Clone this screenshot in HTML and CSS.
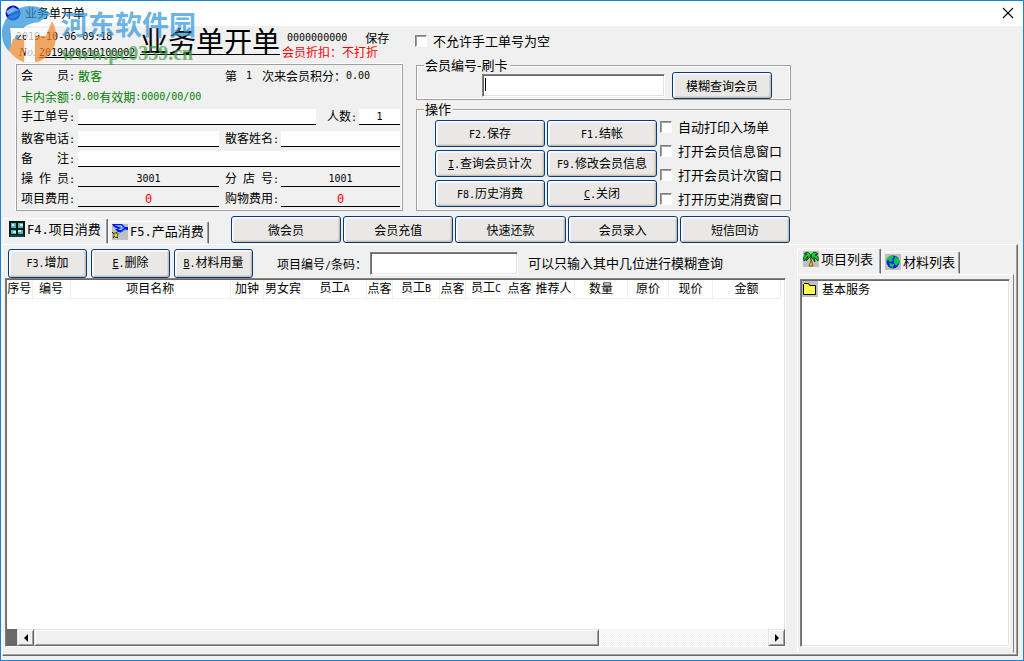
FILE: index.html
```html
<!DOCTYPE html>
<html lang="zh-CN">
<head>
<meta charset="utf-8">
<title>业务单开单</title>
<link rel="stylesheet" href="styles.css">
</head>
<body>
<div class="window">
  <header class="titlebar">
    <svg class="app-icon" viewBox="0 0 16 16"><circle cx="8" cy="8" r="7.5" fill="#1010c8"/><path d="M1 6L8 2L14 5L9 7L3 10Z" fill="#7fb4ff"/><path d="M3 12L13 8L14 10L8 14Z" fill="#4668ee"/></svg>
    <span>业务单开单</span>
    <button class="close" aria-label="关闭"><svg viewBox="0 0 12 12"><path d="M1 1L11 11M11 1L1 11" stroke="#000" stroke-width="1.1"/></svg></button>
  </header>

  <section class="top">
    <div class="bill">
      <div class="bill-head">
        <div class="stamp">
          <div class="n">2019-10-06 09:18</div>
          <div class="serial"><i>No.</i><u class="n">2019100610100002</u></div>
        </div>
        <h1>业务单开单</h1>
        <div class="status">
          <div class="status-row"><span class="n">0000000000</span><span>保存</span></div>
          <div class="red">会员折扣：不打折</div>
        </div>
      </div>
      <div class="member">
        <div class="row tall">
          <span class="label"><span>会</span><span>员<b class="n">:</b></span></span><span class="green who">散客</span>
          <span>第</span><span class="n visit">1</span><span>次来会员积分：</span><span class="n">0.00</span>
        </div>
        <div class="row tall green">卡内余额<span class="n">:0.00</span>有效期<span class="n">:0000/00/00</span></div>
        <div class="row first">
          <label class="label" for="manual"><span>手工单号<b class="n">:</b></span></label><input id="manual" class="field">
          <label class="people" for="people">人数<b class="n">:</b></label><input id="people" class="field small" value="1">
        </div>
        <div class="row second">
          <label class="label" for="phone"><span>散客电话<b class="n">:</b></span></label><input id="phone" class="field">
          <label class="label second-label" for="name"><span>散客姓名<b class="n">:</b></span></label><input id="name" class="field half">
        </div>
        <div class="row">
          <label class="label" for="memo"><span>备</span><span>注<b class="n">:</b></span></label><input id="memo" class="field">
        </div>
        <div class="row">
          <label class="label" for="operator"><span>操</span><span>作</span><span>员<b class="n">:</b></span></label><input id="operator" class="field plain" value="3001" readonly>
          <label class="label second-label" for="branch"><span>分</span><span>店</span><span>号<b class="n">:</b></span></label><input id="branch" class="field half plain" value="1001" readonly>
        </div>
        <div class="row">
          <label class="label" for="itemcost"><span>项目费用<b class="n">:</b></span></label><input id="itemcost" class="field plain cost" value="0" readonly>
          <label class="label second-label" for="goodscost"><span>购物费用<b class="n">:</b></span></label><input id="goodscost" class="field half plain cost" value="0" readonly>
        </div>
      </div>
    </div>

    <div class="operations">
      <label class="check no-empty"><input type="checkbox">不允许手工单号为空</label>
      <fieldset class="swipe">
        <legend>会员编号-刷卡</legend>
        <div class="swipe-row">
          <div class="card-wrap"><input class="sunken" aria-label="会员编号"><span class="caret"></span></div>
          <button class="btn">模糊查询会员</button>
        </div>
      </fieldset>
      <fieldset>
        <legend>操作</legend>
        <div class="actions">
          <div class="action-grid">
            <button class="btn"><span class="n">F2.</span>保存</button>
            <button class="btn"><span class="n">F1.</span>结帐</button>
            <button class="btn"><span class="n"><u>I</u>.</span>查询会员计次</button>
            <button class="btn"><span class="n">F9.</span>修改会员信息</button>
            <button class="btn"><span class="n">F8.</span>历史消费</button>
            <button class="btn"><span class="n"><u>C</u>.</span>关闭</button>
          </div>
          <div class="checks">
            <label class="check"><input type="checkbox">自动打印入场单</label>
            <label class="check"><input type="checkbox">打开会员信息窗口</label>
            <label class="check"><input type="checkbox">打开会员计次窗口</label>
            <label class="check"><input type="checkbox">打开历史消费窗口</label>
          </div>
        </div>
      </fieldset>
    </div>
  </section>

  <nav class="strip">
    <button class="tab active">
      <svg viewBox="0 0 16 16"><rect width="16" height="16" fill="#001818"/><path d="M2 2H7V7H2ZM9 2H14V7H9ZM2 9H7V13H2ZM9 9H14V13H9Z" fill="#58b0b8"/><path d="M3 3H5V5H3ZM11 3H14V5H11ZM4 10H7V12H4ZM9 9H12V11H9Z" fill="#c8f0f0"/><path d="M1 15H15" stroke="#008080"/></svg>
      <span><span class="n big">F4.</span>项目消费</span>
    </button>
    <button class="tab">
      <svg viewBox="0 0 16 16"><rect width="16" height="16" fill="#c0c0c0"/><path d="M0 0H10L13 3H16V6H12L10 8H6L3 5H7L2 3Z" fill="#0010f0"/><path d="M2 1H9L12 4L9 6H6L9 4Z" fill="#b8f0ff"/><path d="M3 2H9M5 4H11" stroke="#0010f0" stroke-width=".7"/><path d="M0 8L6 14M5 8L1 14" stroke="#000"/><path d="M2 9H5L6 11L4 14L2 12Z" fill="#f0e000" stroke="#000" stroke-width=".6"/><path d="M6 10L14 5" stroke="#00a8c8"/></svg>
      <span><span class="n big">F5.</span>产品消费</span>
    </button>
    <div class="quick">
      <button class="btn">微会员</button>
      <button class="btn">会员充值</button>
      <button class="btn">快速还款</button>
      <button class="btn">会员录入</button>
      <button class="btn">短信回访</button>
    </div>
  </nav>

  <main class="page">
    <section class="items">
      <div class="tools">
        <button class="btn"><span class="n">F3.</span>增加</button>
        <button class="btn"><span class="n"><u>E</u>.</span>删除</button>
        <button class="btn"><span class="n"><u>B</u>.</span>材料用量</button>
        <label for="code">项目编号<span class="n">/</span>条码：</label>
        <input id="code" class="sunken">
        <span class="hint">可以只输入其中几位进行模糊查询</span>
      </div>
      <div class="grid-box">
        <div class="grid-scroll">
          <table>
            <colgroup><col class="w25"><col class="w38"><col><col class="w33"><col class="w39"><col class="w64"><col class="w26"><col class="w47"><col class="w26"><col class="w41"><col class="w26"><col class="w42"><col class="w53"><col class="w41"><col class="w44"><col class="w68"></colgroup>
            <thead><tr><th>序号</th><th>编号</th><th>项目名称</th><th>加钟</th><th>男女宾</th><th>员工<span class="n">A</span></th><th>点客</th><th>员工<span class="n">B</span></th><th>点客</th><th>员工<span class="n">C</span></th><th>点客</th><th>推荐人</th><th>数量</th><th>原价</th><th>现价</th><th>金额</th></tr></thead>
          </table>
        </div>
        <div class="scrollbar">
          <span class="gutter"></span>
          <button class="arrow" aria-label="向左滚动"><svg viewBox="0 0 8 8"><path d="M6 0V8L2 4Z"/></svg></button>
          <div class="track"><div class="thumb"></div></div>
          <button class="arrow" aria-label="向右滚动"><svg viewBox="0 0 8 8"><path d="M2 0V8L6 4Z"/></svg></button>
        </div>
      </div>
    </section>

    <aside class="lists">
      <div class="list-tabs">
        <button class="tab active">
          <svg viewBox="0 0 16 16"><rect width="16" height="16" fill="#c0c0c0"/><path d="M7 5H9L8 8L10 15H6L8 10Z" fill="#e8d800" stroke="#503800" stroke-width=".7"/><path d="M8 5C6 0 3 1 1 3H4C1 4 0 7 1 10L5 5L3 10L8 5L12 11L11 6L15 10C16 6 14 4 12 4L15 3C12 0 9 1 8 5Z" fill="#00d828" stroke="#002800" stroke-width=".8"/></svg>
          <span>项目列表</span>
        </button>
        <button class="tab">
          <svg viewBox="0 0 16 16"><rect width="16" height="16" fill="#c0c0c0"/><circle cx="8" cy="8" r="6.5" fill="#1010f8"/><path d="M7 1L9 3L7 5L8 7L5 8L3 6L2 7L1 6L3 3ZM10 3L14 4V9L11 12L9 9L9 6ZM4 9L9 10L8 14L5 12Z" fill="#00c848"/><path d="M10 2L13 4M3 12L6 14" stroke="#008080"/></svg>
          <span>材料列表</span>
        </button>
      </div>
      <div class="list-page">
        <ul class="tree">
          <li><svg viewBox="0 0 16 16"><rect width="16" height="16" fill="#c0c0c0"/><path d="M1.500 13.500V3.500L2.500 2.500H6.500L7.500 4.500H13.500V13.500Z" fill="#ffff50" stroke="#000"/></svg><span>基本服务</span></li>
        </ul>
      </div>
    </aside>
  </main>

  <div class="watermark">
    <svg viewBox="0 0 58 58"><path d="M28 1C12 2 1 14 1 29C1 36 4 42 8 46L16 36C20 22 25 19 38 17L50 9C45 4 37 1 28 1Z" fill="#2c91d8"/><path d="M9 23H48L43 30H35V57H25V30H15L10 43V30Z" fill="#fff"/><path d="M51 16C58 28 56 45 44 53C40 56 36 57 34 57V31H45Z" fill="#f08a2c"/><path d="M12 34H23V57C17 55 12 51 8 46Z" fill="#f08a2c"/></svg>
    <div class="mark-text"><div class="mark-name">河东软件园</div><div class="mark-url">www.pc0359.cn</div></div>
  </div>
</div>
</body>
</html>
```
FILE: styles.css
```css
* { box-sizing: border-box; }

body {
  margin: 0;
  font-family: "Noto Sans CJK SC", sans-serif;
  font-size: 12px;
  line-height: 14px;
  color: #000;
}

button, input { font: inherit; color: inherit; margin: 0; }
svg { display: block; flex: none; }
b, i { font-weight: 400; }

.n { font-family: "DejaVu Sans Mono", monospace; font-size: 10px; }
.big { font-size: 12px; }
.green { color: #008000; }
.red { color: #f00; }

.window {
  position: relative;
  display: flex;
  flex-direction: column;
  min-height: 100vh;
  padding-bottom: 4px;
  border: 1px solid #1883d7;
  background: #f0f0f0;
}

.titlebar {
  display: flex;
  align-items: center;
  gap: 4px;
  height: 25px;
  padding: 0 4px 2px;
  background: #fff;
}
.app-icon { width: 16px; height: 16px; }
.close {
  display: grid;
  place-items: center;
  width: 22px;
  height: 22px;
  margin-left: auto;
  padding: 0;
  border: 0;
  background: none;
}
.close svg { width: 12px; height: 12px; }

.top { display: flex; gap: 12px; padding-left: 15px; }
.bill { flex: 0 1 387px; min-width: 0; }
.bill-head { display: flex; height: 38px; }
.stamp { width: 124px; padding-top: 2px; white-space: nowrap; }
.stamp .n { display: inline-block; }
.serial { padding-left: 3px; }
.serial i { display: inline-block; width: 20px; font-family: "Liberation Serif", serif; }
h1 {
  height: 29px;
  margin: 0;
  border-bottom: 1px solid #000;
  font-size: 28px;
  font-weight: 400;
  line-height: 28px;
  white-space: nowrap;
}
.status { padding: 5px 0 0 2px; white-space: nowrap; }
.status-row { display: flex; gap: 18px; padding-left: 5px; }

.member {
  padding: 0 2px 3px 4px;
  border: 1px solid #a0a0a0;
  box-shadow: -1px -1px 0 #fff, inset -1px -1px 0 #fff;
}
.row {
  display: flex;
  align-items: flex-end;
  height: 20px;
  white-space: nowrap;
}
.row.tall { height: 21px; align-items: center; }
.row.first { height: 18px; }
.row.second { height: 22px; }
.label { display: flex; flex: none; justify-content: space-between; width: 54px; margin-right: 3px; }
.second-label { margin-left: 6px; margin-right: 2px; }
.who { width: 147px; }
.visit { padding: 0 10px 0 9px; }
.people { margin: 0 2px 0 11px; }
.field {
  flex: 1 1 0;
  min-width: 0;
  height: 16px;
  padding: 0;
  border: 0;
  border-bottom: 1px solid #000;
  background: #fff;
  font-family: "DejaVu Sans Mono", monospace;
  font-size: 10px;
  text-align: center;
}
.field.small { flex: 0 0 41px; }
.field.half { flex: 0 0 119px; }
.field.plain { background: transparent; }
.field.cost { color: #f00; font-size: 12px; line-height: 14px; }

.operations {
  display: flex;
  flex-direction: column;
  flex: 0 1 376px;
  gap: 2px;
  padding-top: 8px;
}
.check { display: flex; align-items: center; gap: 6px; font-size: 13px; line-height: 14px; white-space: nowrap; }
.check input {
  appearance: none;
  width: 12px;
  height: 12px;
  border: 1px solid;
  border-color: #808080 #fff #fff #808080;
  background: #fff;
  box-shadow: inset 1px 1px 0 #a0a0a0;
}
.no-empty { margin-bottom: 8px; }
fieldset {
  min-width: 0;
  margin: 0 0 0 1px;
  padding: 0 2px 3px 18px;
  border: 1px solid #a0a0a0;
  box-shadow: inset 1px 1px 0 #fff, inset -1px -1px 0 #fff;
}
fieldset.swipe { padding-bottom: 0; }
legend { margin-left: -11px; padding: 0 2px 0 1px; background: #f0f0f0; font-size: 13px; line-height: 14px; }
.swipe-row { display: flex; align-items: center; gap: 7px; padding: 0 16px 0 47px; }
.card-wrap { position: relative; flex: 1; }
.card-wrap .sunken { display: block; width: 100%; }
.caret { position: absolute; top: 4px; left: 3px; width: 1px; height: 13px; background: #000; }
.swipe-row .btn { width: 100px; }

.sunken {
  height: 23px;
  padding: 0 3px;
  border: 1px solid;
  border-color: #808080 #fff #fff #808080;
  background: #fff;
  box-shadow: inset 1px 1px 0 #696969, inset -1px -1px 0 #e3e3e3;
}

.btn {
  height: 27px;
  padding: 0 4px;
  border: 1px solid #003c82;
  border-radius: 3px;
  background: #e9e8e6;
  box-shadow: inset 1px 1px 0 #fff, inset 2px 2px 0 #f8f4f8, inset -1px -1px 0 #c8bfae, inset -2px -2px 0 #ddd5cf;
  line-height: 14px;
  white-space: nowrap;
}

.actions { display: flex; gap: 3px; padding-top: 4px; }
.action-grid { display: grid; flex: 1; grid-template-columns: 1fr 1fr; gap: 3px 2px; }
.checks { display: flex; flex-direction: column; gap: 10px; width: 128px; }

.strip { display: flex; align-items: flex-end; height: 28px; margin-top: 5px; padding-left: 2px; }
.tab {
  display: flex;
  align-items: center;
  gap: 2px;
  height: 23px;
  padding: 0 5px 2px 3px;
  border: 1px solid;
  border-color: #fff #696969 transparent #fff;
  border-radius: 2px 2px 0 0;
  background: #f0f0f0;
  box-shadow: inset -1px 0 0 #a0a0a0;
  font-size: 13px;
  white-space: nowrap;
}
.tab.active { height: 26px; padding-bottom: 4px; }
.tab svg { width: 16px; height: 16px; }
.strip .tab { width: 101px; }
.strip .tab.active { width: 105px; padding-left: 5px; }
.quick { display: flex; flex: 0 1 559px; gap: 2px; align-self: flex-start; margin-left: 22px; }
.quick .btn { flex: 1; }

.page {
  display: flex;
  flex: 1;
  gap: 11px;
  margin: 0 5px 0 1px;
  padding: 3px 3px 0 2px;
  border: 1px solid;
  border-color: #fff #696969 #696969 #fff;
  box-shadow: inset -1px -1px 0 #a0a0a0;
}
.items { display: flex; flex: 1; flex-direction: column; min-width: 0; padding-bottom: 8px; }
.tools { display: flex; align-items: center; gap: 4px; height: 30px; padding-left: 3px; white-space: nowrap; }
.tools .btn { width: 79px; height: 29px; }
.tools label { margin-left: 20px; padding-top: 4px; }
.tools .sunken { width: 148px; margin-left: -1px; }
.hint { margin-left: 6px; font-size: 13px; }

.grid-box {
  display: flex;
  flex: 1;
  flex-direction: column;
  border: 1px solid;
  border-color: #808080 #fff #fff #808080;
  background: #fff;
  box-shadow: inset 1px 1px 0 #696969, inset -1px -1px 0 #e3e3e3;
}
.grid-scroll { flex: 1; padding: 1px 4px 0 1px; }
table { width: 100%; border-collapse: collapse; table-layout: fixed; }
th {
  height: 18px;
  padding: 0 0 1px;
  border-right: 1px solid #f0f0f0;
  border-bottom: 1px solid #f0f0f0;
  font-weight: 400;
  white-space: nowrap;
}
.w25 { width: 25px; }
.w26 { width: 26px; }
.w33 { width: 33px; }
.w38 { width: 38px; }
.w39 { width: 39px; }
.w41 { width: 41px; }
.w42 { width: 42px; }
.w44 { width: 44px; }
.w47 { width: 47px; }
.w53 { width: 53px; }
.w64 { width: 64px; }
.w68 { width: 68px; }

.scrollbar { display: flex; height: 17px; }
.gutter { width: 11px; background: #696969; }
.arrow, .thumb {
  border: 1px solid;
  border-color: #e3e3e3 #696969 #696969 #e3e3e3;
  background: #f0f0f0;
  box-shadow: inset 1px 1px 0 #fff, inset -1px -1px 0 #a0a0a0;
}
.arrow { display: grid; place-items: center; width: 17px; padding: 0; }
.arrow svg { width: 8px; height: 8px; }
.track { flex: 1; background: repeating-conic-gradient(#fff 0 25%, #f0f0f0 0 50%) 0 0 / 2px 2px; }
.thumb { width: 77%; height: 100%; }

.lists { display: flex; flex: 0 0 217px; flex-direction: column; padding-bottom: 2px; }
.list-tabs { display: flex; align-items: flex-end; height: 26px; }
.list-page {
  display: flex;
  flex: 1;
  padding: 4px 3px 5px 2px;
  border: 1px solid;
  border-color: #fff #808080 transparent #fff;
}
.list-tabs .tab { width: 79px; }
.list-tabs .tab.active { width: 84px; padding-left: 5px; }
.tree {
  flex: 1;
  margin: 0;
  padding: 1px;
  border: 1px solid;
  border-color: #808080 #fff #fff #808080;
  background: #fff;
  box-shadow: inset 1px 1px 0 #696969, inset -1px -1px 0 #e3e3e3;
  list-style: none;
}
.tree li { display: flex; align-items: center; gap: 4px; }
.tree svg { width: 16px; height: 16px; }

.watermark {
  position: absolute;
  top: 4px;
  left: 0;
  display: flex;
  gap: 2px;
  opacity: .72;
  pointer-events: none;
}
.watermark svg { width: 58px; height: 58px; }
.mark-text { font-weight: 700; white-space: nowrap; }
.mark-name { color: #3598dc; font-size: 27px; line-height: 38px; }
.mark-url { color: #43a047; font-family: "Liberation Serif", serif; font-size: 20px; line-height: 20px; }
```
